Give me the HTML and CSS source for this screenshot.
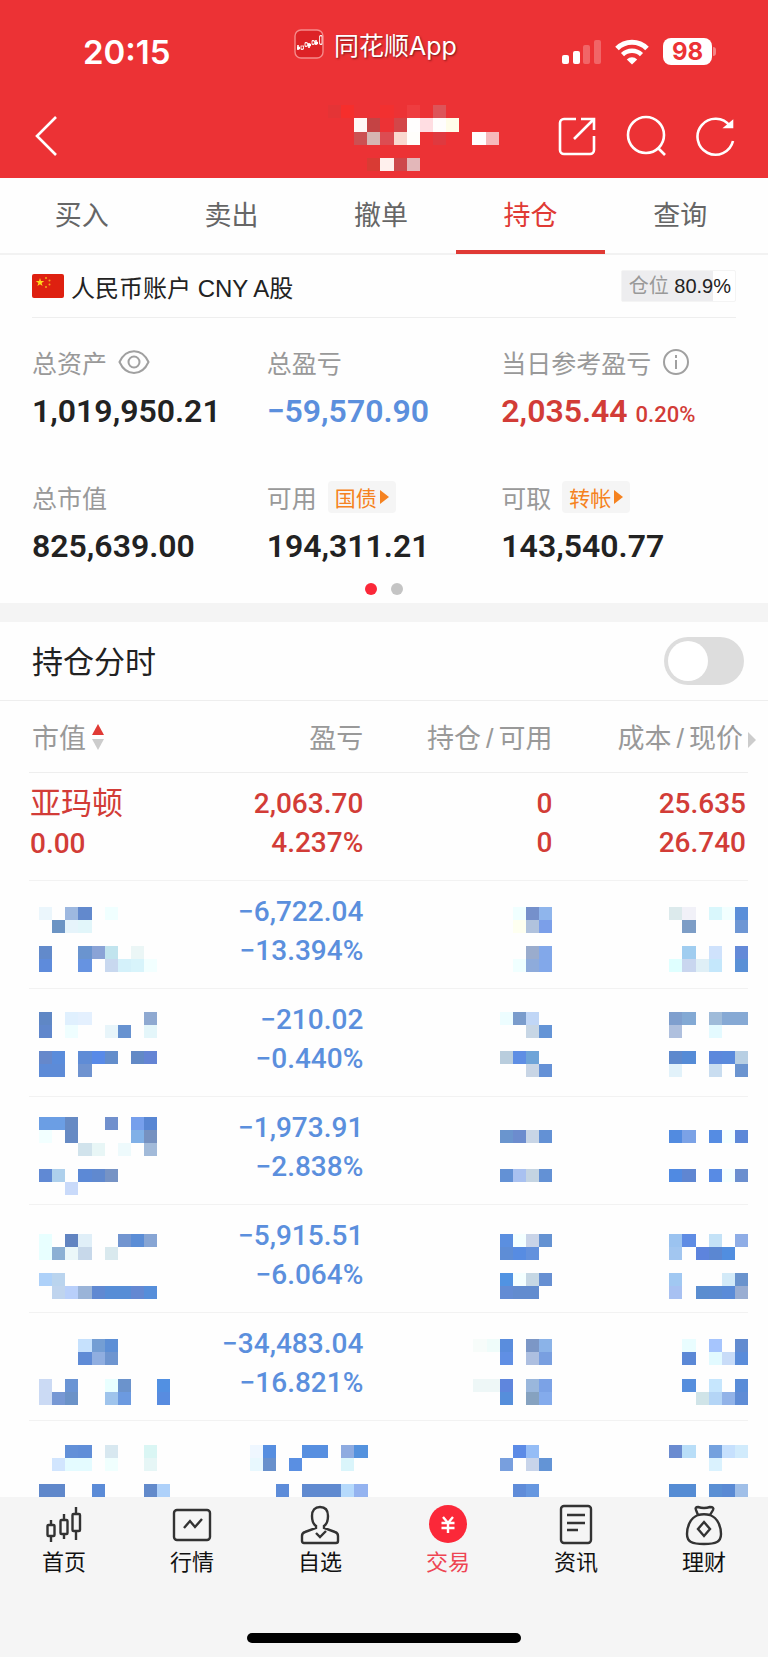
FILE: index.html
```html
<!DOCTYPE html>
<html lang="zh-CN">
<head>
    <meta charset="UTF-8">
    <meta name="viewport" content="width=device-width, initial-scale=1.0">
    <title>持仓</title>
    <link rel="stylesheet" href="styles.css">
    <script src="mosaic.js" defer></script>
</head>
<body>
    <header class="header">
        <div class="status">
            <span class="time">20:15</span>
            <span class="app-name">
                <svg class="app-icon" viewBox="0 0 30 30">
                    <rect x="1" y="1" width="28" height="28" rx="6" fill="#dd2226" stroke="#f58a8a" stroke-width="1.4"/>
                    <path d="M4 16v5M8 17v4M12 13v5M15 14v5M19 11v5M22 11v5M27 6v10" stroke="#fff" stroke-width="1.6"/>
                    <path d="M3 19h3M14 16h3M21 14h3" stroke="#fff" stroke-width="2.4"/>
                    <rect x="7" y="17" width="2.6" height="3" fill="#dd2226" stroke="#fff" stroke-width=".8"/>
                    <rect x="11" y="14" width="2.6" height="3" fill="#dd2226" stroke="#fff" stroke-width=".8"/>
                    <rect x="18" y="12" width="2.6" height="3" fill="#dd2226" stroke="#fff" stroke-width=".8"/>
                    <rect x="25.6" y="7" width="2.4" height="8" fill="#dd2226" stroke="#fff" stroke-width=".8"/>
                </svg>
                同花顺App
            </span>
            <span class="status-icons">
                <svg width="39" height="26" viewBox="0 0 39 26" fill="#fff">
                    <rect x="0" y="16" width="7" height="9" rx="2"/>
                    <rect x="11" y="12" width="7" height="13" rx="2"/>
                    <rect x="21" y="6" width="7" height="19" rx="2" opacity=".25"/>
                    <rect x="32" y="1" width="7" height="24" rx="2" opacity=".25"/>
                </svg>
                <svg width="34" height="26" viewBox="0 0 34 26">
                    <path d="M2 9.500a21 21 0 0 1 30 0" fill="none" stroke="#fff" stroke-width="5"/>
                    <path d="M7.500 15.600a13.500 13.500 0 0 1 19 0" fill="none" stroke="#fff" stroke-width="4.400"/>
                    <path d="M11.800 20.400a7.500 7.500 0 0 1 10.400 0L17 25.500z" fill="#fff"/>
                </svg>
                <span class="battery">98</span>
            </span>
        </div>
        <div class="topbar">
            <a href="#" class="icon-link" aria-label="返回">
                <svg width="24" height="42" viewBox="0 0 24 42"><path d="M22 2L3 21l19 19"/></svg>
            </a>
            <svg class="title-mosaic mosaic" viewBox=".35 0 14 6" data-cells="31:e43436 41:f62e2c 71:f23030 91:ee3d40 b1:dd5459 52:fff7f6 62:c44344 82:d34649 92:fffefe a2:ffdde2 b2:fffdfd c2:fffde9 53:cc5052 63:d5b5b2 73:dc4c52 83:f9d8cf 93:fffefb b3:df393f e3:fffefe f3:f6b9bb 65:d93b34 75:fff0ed 85:cd474b 95:e3b7b9"></svg>
            <nav class="tools">
                <a href="#" class="icon-link" aria-label="分享">
                    <svg width="40" height="42" viewBox="0 0 40 42"><path d="M20 4H8a4 4 0 0 0-4 4v27a4 4 0 0 0 4 4h26a4 4 0 0 0 4-4V21"/><path d="M18 24L38 4M25 4h13v11"/></svg>
                </a>
                <a href="#" class="icon-link" aria-label="搜索">
                    <svg width="42" height="42" viewBox="0 0 42 42"><circle cx="21" cy="20" r="18"/><path d="M33 33l7 7"/></svg>
                </a>
                <a href="#" class="icon-link" aria-label="刷新">
                    <svg width="40" height="42" viewBox="0 0 40 42"><path d="M34 11A18 18 0 1 0 37 26"/><path d="M36 7v5h-6z" fill="#fff"/></svg>
                </a>
            </nav>
        </div>
    </header>

    <nav class="tabs">
        <a href="#" class="tab">买入</a>
        <a href="#" class="tab">卖出</a>
        <a href="#" class="tab">撤单</a>
        <a href="#" class="tab active">持仓</a>
        <a href="#" class="tab">查询</a>
    </nav>

    <main class="content">
        <section class="account">
            <div class="account-head">
                <svg class="flag" viewBox="0 0 32 24">
                    <rect width="32" height="24" rx="2" fill="#de2010"/>
                    <path fill="#ffd91c" d="M8 4l1 3h3.200l-2.600 2 1 3L8 10.200 5.400 12l1-3-2.600-2H7z"/>
                    <g fill="#f5a81c"><circle cx="14" cy="4" r="1"/><circle cx="17.500" cy="6.500" r="1"/><circle cx="17.500" cy="10.500" r="1"/><circle cx="14" cy="13" r="1"/></g>
                </svg>
                <span class="account-name">人民币账户 CNY A股</span>
                <span class="ratio"><span class="ratio-label">仓位</span> 80.9%</span>
            </div>
            <div class="summary">
                <div class="item">
                    <div class="label">总资产
                        <svg width="32" height="26" viewBox="0 0 32 26" fill="none" stroke="#a0a0a0" stroke-width="2"><path d="M1.500 13C8-1.500 24-1.500 30.500 13 24 27.500 8 27.500 1.500 13z"/><circle cx="16" cy="13" r="5.500"/></svg>
                    </div>
                    <div class="value">1,019,950.21</div>
                </div>
                <div class="item">
                    <div class="label">总盈亏</div>
                    <div class="value down">−59,570.90</div>
                </div>
                <div class="item">
                    <div class="label">当日参考盈亏
                        <svg width="28" height="28" viewBox="0 0 28 28" fill="none" stroke="#a0a0a0" stroke-width="2"><circle cx="14" cy="14" r="12"/><path d="M14 12v9M14 7v3"/></svg>
                    </div>
                    <div class="value up">2,035.44 <small>0.20%</small></div>
                </div>
                <div class="item">
                    <div class="label">总市值</div>
                    <div class="value">825,639.00</div>
                </div>
                <div class="item">
                    <div class="label">可用 <button class="pill">国债<i class="arrow"></i></button></div>
                    <div class="value">194,311.21</div>
                </div>
                <div class="item">
                    <div class="label">可取 <button class="pill">转帐<i class="arrow"></i></button></div>
                    <div class="value">143,540.77</div>
                </div>
            </div>
            <div class="dots"><span class="dot on"></span><span class="dot"></span></div>
        </section>

        <section class="switch-row">
            <label for="timeshare">持仓分时</label>
            <input type="checkbox" id="timeshare" class="switch">
        </section>

        <table class="positions">
            <thead>
                <tr>
                    <th class="c1">市值<svg class="sort" viewBox="0 0 12 26"><path d="M6 0l6 11H0z" fill="#e03a35"/><path d="M0 15h12L6 26z" fill="#ccc"/></svg></th>
                    <th class="c2">盈亏</th>
                    <th class="c3">持仓<span class="slash">/</span>可用</th>
                    <th class="c4">成本<span class="slash">/</span>现价<i class="more"></i></th>
                </tr>
            </thead>
            <tbody>
                <tr class="up">
                    <td><span class="name">亚玛顿</span><br>0.00</td>
                    <td>2,063.70<br>4.237%</td>
                    <td>0<br>0</td>
                    <td>25.635<br>26.740</td>
                </tr>
                <tr class="down">
                    <td><svg class="mosaic" viewBox="-.7 -1.100 10 7" data-cells="00:ebf6fc 20:9db8e0 30:6289cd 50:f0ffff 11:6c94c4 21:e6f4fb 31:e2f6fa 03:628acb 33:6a94cf 43:8aa3d6 53:c1e4ee 73:ebf6f6 04:5e8bdb 34:6693e1 54:c8d8ef 64:d4f1fa 74:d8f4fb 84:f2ffff"></svg></td>
                    <td>−6,722.04<br>−13.394%</td>
                    <td><svg class="mosaic" viewBox="0 -1.100 10 7" data-cells="70:f0ffff 80:7590cb 90:8fb5ec 71:fefff0 81:b0c2dd 91:7b9fe9 83:9aaccd 93:82a8ea 74:f0ffff 84:8eabdb 94:82a8ea"></svg></td>
                    <td><svg class="mosaic" viewBox="-.15 -1.100 10 7" data-cells="40:dceaec 50:f1f1f8 70:d9f7fc 80:f2ffff 90:5a8fd9 51:7d9dc6 91:6e96d4 53:a0cdf0 73:cfe2fc 93:648ad8 44:dfffff 54:c9d6ef 64:dfeff6 74:c4e7fb 94:5a90d6"></svg></td>
                </tr>
                <tr class="down">
                    <td><svg class="mosaic" viewBox="-.7 -.9 10 7" data-cells="00:5f87c5 20:e0f0fe 30:e4f0fe 80:8fa9d1 01:6087cc 21:effeff 51:e8f5fa 61:6792d0 81:e4f6fa 03:6688cb 13:5a8cdb 33:5f8cd6 43:588ae8 53:638dcb 73:6289c6 83:6484d4 04:5d8bd7 14:5d8bd7 34:6f93d0"></svg></td>
                    <td>−210.02<br>−0.440%</td>
                    <td><svg class="mosaic" viewBox="0 -.9 10 7" data-cells="60:edfdff 70:7a9ccc 80:c0d6f6 81:c7d6e5 91:6494d6 63:b9cddd 73:5e8ee4 83:6ea4d8 84:c8d5e5 94:6591d6"></svg></td>
                    <td><svg class="mosaic" viewBox="-.15 -.9 10 7" data-cells="40:7f9fce 50:83a9d4 70:9fbbd9 80:86a9d4 90:86a9d4 41:afc0de 71:e4faff 43:5e89cd 53:558bd6 73:5c88dc 83:5a8adc 93:b8cfe3 44:e2f2fa 74:c9ddf0 94:6b94d0"></svg></td>
                </tr>
                <tr class="down">
                    <td><svg class="mosaic" viewBox="-.7 -.65 10 7" data-cells="00:6b9ee4 10:6b9ee4 20:668ac4 50:7190cd 70:769fec 80:5886d3 01:f2ffff 21:668ac4 71:80b0e7 81:7691c0 32:d1e3ec 42:e8f6f6 62:eefafc 82:a2bad9 04:6089d4 14:aed0ec 34:5c89d6 44:6089cf 54:7693c5 25:c9dafa"></svg></td>
                    <td>−1,973.91<br>−2.838%</td>
                    <td><svg class="mosaic" viewBox="0 -.65 10 7" data-cells="61:6a95ce 71:6c8cce 81:c8d5e6 91:6391d5 64:6391d5 74:a9c1f0 84:c4d4e2 94:6391d5"></svg></td>
                    <td><svg class="mosaic" viewBox="-.15 -.65 10 7" data-cells="41:528be0 51:7ba2e6 71:558ce3 81:f4ffff 91:5d88d8 44:508ae2 54:5f86d2 74:588be4 84:f4ffff 94:6b8fcf"></svg></td>
                </tr>
                <tr class="down">
                    <td><svg class="mosaic" viewBox="-.7 -1.350 10 7" data-cells="00:e8ffff 20:6184c1 30:e0eff8 60:7295d0 70:5b8dd6 80:87a5d4 01:e8ffff 11:8cb0d4 21:ebf7f9 31:c7d8ea 51:d9e9ee 03:aed1f9 13:bad4ee 14:bfd4ee 24:b8cffa 34:9ab4d8 44:6089d2 54:578dd6 64:578dd6 74:6488d2 84:568eda"></svg></td>
                    <td>−5,915.51<br>−6.064%</td>
                    <td><svg class="mosaic" viewBox="0 -1.350 10 7" data-cells="60:5b8fe0 70:f4ffff 80:c9d4e8 90:6492d2 61:5e8dd6 71:578ce2 81:6391dd 63:5193e2 73:f4ffff 83:c5d7e4 93:668fd2 64:638cd4 74:628ccf 84:628ccf"></svg></td>
                    <td><svg class="mosaic" viewBox="-.15 -1.350 10 7" data-cells="40:9bc3f0 50:5f8ce4 70:c4e2f7 90:8fade6 41:a2c6f0 61:5d84dd 71:5b87d2 81:518ee0 43:a1c8f2 83:d3eaf8 93:6a93cd 44:a8c1f2 64:5a8dd0 74:5b8cd2 84:5a8bd8 94:99add2"></svg></td>
                </tr>
                <tr class="down">
                    <td><svg class="mosaic" viewBox="-.7 -1.150 10 7" data-cells="30:c6e1fd 40:749ed4 50:5d8fd6 31:5f8bd6 41:90aee0 51:6e95d0 03:cbdaf4 23:6a94d4 53:e9ffff 63:6b93cc 93:5290e2 04:cbdaf4 14:7798d4 24:6b92c8 54:9fc4ec 64:6c9ae0 94:588ce0"></svg></td>
                    <td>−34,483.04<br>−16.821%</td>
                    <td><svg class="mosaic" viewBox="0 -1.150 10 7" data-cells="40:f7fcfa 50:effcfa 60:5a8ddd 80:7c97c6 90:8bb3e8 61:608fe4 81:adbfe0 91:799fe0 43:eef7f7 53:eef7f7 63:5f86dd 83:9ab7dc 93:7ba2e6 64:568edb 84:86a2c0 94:84abec"></svg></td>
                    <td><svg class="mosaic" viewBox="-.15 -1.150 10 7" data-cells="50:e9fdff 70:a6c5fd 90:628bd0 51:5b88d6 71:e2faff 81:c8dcf8 91:5a8cda 53:568edd 73:c6e6fd 93:598cd8 64:d0e4e8 74:b4d5f6 84:92b3e8 94:5f8cd6"></svg></td>
                </tr>
                <tr class="down">
                    <td><svg class="mosaic" viewBox="-.7 -.95 10 7" data-cells="20:6290d8 30:608ed8 50:d8e8f0 80:daf6f4 11:d1e5fe 21:e4fbff 31:e4fbff 51:f0fffe 81:e6f6f6 03:6088cb 13:6088cb 43:5b8bd7 83:628acb 93:aed1fa"></svg></td>
                    <td><svg class="mosaic" viewBox="-.35 -.95 10 7" data-cells="10:eff7ff 20:568ee0 50:578fe0 60:578fe0 80:8eabe0 90:5492de 11:e8f8fe 21:6890cc 41:5a8fe2 81:daf5fb 33:5d8cd9 53:608ad0 63:608ad0 73:608ad0 83:b6dafc 93:94b3f0"></svg></td>
                    <td><svg class="mosaic" viewBox="0 -.95 10 7" data-cells="70:5c8be6 80:95bdf6 61:789fde 81:c8d4ea 91:6394d6 73:5f8cd9 83:6697e0"></svg></td>
                    <td><svg class="mosaic" viewBox="-.15 -.95 10 7" data-cells="40:6a8bd0 50:b9def8 70:74a1de 80:c6e0fd 90:d1ebfc 71:daf2fe 43:558cd4 53:558cd4 73:5a8fd4 83:5a8ad4 93:a0bfe8"></svg></td>
                </tr>
            </tbody>
        </table>
    </main>

    <footer class="footer">
        <nav class="menu">
            <a href="#" class="menu-item">
                <svg viewBox="0 0 44 44"><path d="M9 18v5M9 34v6M22 12v6M22 32v5M34 5v6M34 29v9"/><rect x="5.500" y="23" width="7" height="11" rx="1"/><rect x="18.500" y="18" width="7" height="14" rx="1"/><rect x="30.500" y="12" width="7.500" height="17" rx="1"/></svg>
                首页
            </a>
            <a href="#" class="menu-item">
                <svg viewBox="0 0 44 44"><rect x="4" y="8" width="36" height="30" rx="3"/><path d="M14 26l6-7 5 6 7-8"/></svg>
                行情
            </a>
            <a href="#" class="menu-item">
                <svg viewBox="0 0 44 44"><path d="M18 24c-3-2-4-6-4-10 0-6 3-9 8-9s8 3 8 9c0 4-1 8-4 10v2l11 4q3 1 3 4v5q0 2-2 2H6q-2 0-2-2v-5q0-3 3-4l11-4z"/><path d="M18 31l4 4 6-6"/></svg>
                自选
            </a>
            <a href="#" class="menu-item current">
                <svg viewBox="0 0 44 44"><circle cx="22" cy="22" r="19" fill="#fb2839" stroke="none"/><path d="M17 15l5 6 5-6M22 21v10M15.500 21h13M15.500 26h13" stroke="#fff"/></svg>
                交易
            </a>
            <a href="#" class="menu-item">
                <svg viewBox="0 0 44 44"><rect x="7" y="4" width="30" height="37" rx="3"/><path d="M13 13h18M13 21h18M13 28h11"/></svg>
                资讯
            </a>
            <a href="#" class="menu-item">
                <svg viewBox="0 0 44 44"><path d="M16 13C8 16 5 25 5 32c0 8 5 10 17 10s17-2 17-10c0-7-3-16-11-19-4-1-8-1-12 0z"/><path d="M16 13l-2-5c-1-2 0-3 2-3q6 2 12 0c3 0 4 1 3 3l-3 5"/><path d="M22 20l6 7-6 7-6-7z"/></svg>
                理财
            </a>
        </nav>
        <div class="home-bar"></div>
    </footer>
</body>
</html>
```
FILE: styles.css
```css
* {
    box-sizing: border-box;
}
body {
    margin: 0;
    height: 100vh;
    display: flex;
    flex-direction: column;
    background-color: #fefefe;
    color: #222;
    font-family: "Liberation Sans", "Noto Sans CJK SC", sans-serif;
}
a {
    color: inherit;
    text-decoration: none;
}

/* header */
.header {
    height: 178px;
    background-color: #ec3235;
    color: white;
}
.status {
    display: flex;
    align-items: center;
    padding: 29px 56px 0 83px;
    height: 74px;
}
.time {
    width: 211px;
    font-family: Inter, sans-serif;
    font-size: 33px;
    font-weight: 600;
}
.app-name {
    display: flex;
    align-items: center;
    gap: 10px;
    height: 30px;
    align-self: flex-start;
    font-size: 25px;
    font-family: Inter, "Noto Sans CJK SC", sans-serif;
    text-shadow: 1px 1px 2px #7a1a1a;
}
.app-icon {
    width: 30px;
    height: 30px;
}
.status-icons {
    display: flex;
    align-items: center;
    gap: 14px;
    margin-left: auto;
}
.battery {
    position: relative;
    width: 49px;
    height: 27px;
    border-radius: 8px;
    background-color: white;
    color: #ec3235;
    font-family: Inter, sans-serif;
    font-size: 24px;
    font-weight: 700;
    line-height: 27px;
    text-align: center;
}
.battery::after {
    content: "";
    position: absolute;
    top: 9px;
    right: -4px;
    width: 3px;
    height: 9px;
    border-radius: 0 3px 3px 0;
    background-color: #f38486;
}
.topbar {
    display: grid;
    grid-template-columns: 1fr auto 1fr;
    padding: 18px 32px 0 34px;
}
.icon-link {
    display: block;
    height: 42px;
    margin-top: 23px;
}
.icon-link svg {
    display: block;
    fill: none;
    stroke: white;
    stroke-width: 2.6;
}
.tools {
    display: flex;
    justify-content: flex-end;
    gap: 29px;
}
.mosaic {
    display: block;
    width: 131px;
    height: 92px;
    overflow: visible;
    shape-rendering: crispEdges;
}
.title-mosaic {
    width: 184px;
    height: 79px;
}

/* tabs */
.tabs {
    display: flex;
    height: 77px;
    padding: 0 13px 0 7px;
    border-bottom: 2px solid #f2f2f2;
}
.tab {
    flex: 1;
    color: #666;
    font-size: 27px;
    line-height: 77px;
    text-align: center;
}
.active {
    margin-bottom: -1px;
    color: #e03a35;
    border-bottom: 4px solid #e03a35;
}

/* account */
.content {
    flex: 1;
    min-height: 0;
    overflow: hidden;
}
.account {
    padding: 0 32px;
    border-bottom: 19px solid #f4f4f4;
}
.account-head {
    display: flex;
    align-items: center;
    height: 63px;
    border-bottom: 1px solid #eee;
}
.flag {
    width: 32px;
    height: 24px;
}
.account-name {
    margin-left: 7px;
    font-size: 24px;
}
.ratio {
    margin-left: auto;
    padding: 0 4px 0 7px;
    border: 1px solid #f4f4f4;
    border-radius: 2px;
    background: linear-gradient(to right, #ededef 80.9%, white 80.9%);
    font-size: 20px;
    line-height: 30px;
}
.ratio-label {
    color: #999;
}
.summary {
    display: grid;
    grid-template-columns: repeat(3, 1fr);
    row-gap: 40px;
    padding-top: 26px;
}
.label {
    display: flex;
    align-items: center;
    gap: 11px;
    height: 36px;
    color: #999;
    font-size: 25px;
    white-space: nowrap;
}
.value {
    height: 55px;
    margin-top: 4px;
    font-family: Roboto, sans-serif;
    font-size: 32px;
    font-weight: 600;
    line-height: 55px;
    white-space: nowrap;
}
.value small {
    font-size: 22px;
    font-weight: 500;
    line-height: 1;
}
.up {
    color: #d23c37;
}
.down {
    color: #5b8fdd;
}
.pill {
    display: flex;
    align-items: center;
    gap: 3px;
    height: 32px;
    padding: 0 7px;
    border: none;
    border-radius: 4px;
    background-color: #f5f5f5;
    color: #f58220;
    font-family: inherit;
    font-size: 21px;
}
.arrow {
    border: 7px solid transparent;
    border-left: 9px solid #f58220;
    border-right: 0;
}
.dots {
    display: flex;
    justify-content: center;
    gap: 14px;
    padding: 9px 0 8px;
}
.dot {
    width: 12px;
    height: 12px;
    border-radius: 50%;
    background-color: #c4c4c4;
}
.on {
    background-color: #fb2839;
}

/* switch */
.switch-row {
    display: flex;
    align-items: center;
    justify-content: space-between;
    height: 79px;
    padding: 0 24px 0 32px;
    border-bottom: 1px solid #eee;
    font-size: 31px;
}
.switch-row label {
    padding-bottom: 4px;
}
.switch {
    appearance: none;
    width: 80px;
    height: 48px;
    margin: 0;
    padding: 4px;
    border-radius: 24px;
    background-color: #ddd;
}
.switch::before {
    content: "";
    display: block;
    width: 40px;
    height: 40px;
    border-radius: 50%;
    background-color: white;
}
.switch:checked {
    background-color: #e03a35;
}
.switch:checked::before {
    margin-left: auto;
}

/* positions */
.positions {
    width: calc(100% - 49px);
    margin: 0 20px 0 29px;
    border-collapse: collapse;
    table-layout: fixed;
}
.c1 {
    width: 22%;
}
.c2 {
    width: 24.5%;
}
.c3 {
    width: 26.3%;
}
.positions th {
    height: 71px;
    padding: 0;
    border-bottom: 1px solid #eee;
    color: #999;
    font-size: 27px;
    font-weight: 400;
    text-align: right;
    white-space: nowrap;
}
.positions td {
    height: 108px;
    padding: 11px 0 0;
    border-bottom: 1px solid #f2f2f2;
    font-family: Roboto, "Noto Sans CJK SC", sans-serif;
    font-size: 28px;
    font-weight: 500;
    line-height: 39px;
    text-align: right;
    vertical-align: top;
    white-space: nowrap;
}
.positions th:first-child {
    padding-left: 3px;
    text-align: left;
}
.positions td:first-child {
    padding-left: 1px;
    text-align: left;
}
.positions th:last-child {
    padding-right: 5px;
}
.positions td:last-child {
    padding-right: 2px;
}
.positions .mosaic {
    margin-left: auto;
}
.positions td:first-child .mosaic {
    margin-left: 0;
}
.name {
    font-size: 31px;
    font-weight: 400;
}
.slash {
    margin: 0 5px;
}
.sort {
    width: 12px;
    height: 26px;
    margin-left: 6px;
    vertical-align: -2px;
}
.more {
    display: inline-block;
    margin: 0 -13px 0 5px;
    border: 8px solid transparent;
    border-left: 8px solid #ccc;
    border-right: 0;
}

/* footer */
.footer {
    display: flex;
    flex-direction: column;
    justify-content: space-between;
    height: 160px;
    padding: 5px 0 14px;
    background-color: #f5f5f5;
}
.menu {
    display: flex;
}
.menu-item {
    flex: 1;
    display: flex;
    flex-direction: column;
    align-items: center;
    color: #111;
    font-size: 22px;
    line-height: 34px;
}
.menu-item svg {
    width: 44px;
    height: 44px;
    fill: none;
    stroke: #333;
    stroke-width: 2.4;
}
.current {
    color: #ee4553;
}
.home-bar {
    align-self: center;
    width: 274px;
    height: 10px;
    border-radius: 5px;
    background-color: black;
}
```
FILE: mosaic.js
```js
// data-cells: "xy:rrggbb", x and y are single hex digits
document.querySelectorAll(".mosaic").forEach(svg => {
    svg.dataset.cells.split(" ").forEach(cell => {
        const [pos, color] = cell.split(":");
        const rect = document.createElementNS("http://www.w3.org/2000/svg", "rect");
        rect.setAttribute("x", parseInt(pos[0], 16));
        rect.setAttribute("y", parseInt(pos[1], 16));
        rect.setAttribute("width", 1);
        rect.setAttribute("height", 1);
        rect.setAttribute("fill", "#" + color);
        svg.appendChild(rect);
    });
});
```
